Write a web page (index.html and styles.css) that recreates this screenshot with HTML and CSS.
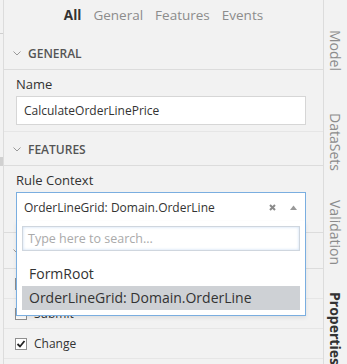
FILE: index.html
```html
<!DOCTYPE html>
<html lang="en">
<head>
  <meta charset="UTF-8">
  <title>Rule Properties</title>
  <link rel="stylesheet" href="styles.css">
</head>
<body>
  <div class="shell">
    <div class="edge">
      <div class="edge-line"></div>
      <div class="edge-block"></div>
    </div>

    <div class="panel">
      <nav class="top-tabs">
        <span class="active">All</span>
        <span>General</span>
        <span>Features</span>
        <span>Events</span>
      </nav>

      <section class="group">
        <header class="group-head">
          <svg class="chev" width="8" height="5" viewBox="0 0 8 5"><path d="M0.5 0.5 L4 4 L7.5 0.5" fill="none" stroke="#999" stroke-width="1"/></svg>
          GENERAL
        </header>
        <div class="field">
          <label>Name</label>
          <div class="input">CalculateOrderLinePrice</div>
        </div>
      </section>

      <section class="group">
        <header class="group-head">
          <svg class="chev" width="8" height="5" viewBox="0 0 8 5"><path d="M0.5 0.5 L4 4 L7.5 0.5" fill="none" stroke="#999" stroke-width="1"/></svg>
          FEATURES
        </header>
        <div class="field field-last">
          <label>Rule Context</label>
          <div class="select">
            <span class="select-value">OrderLineGrid: Domain.OrderLine</span>
            <svg class="clear" width="7" height="7" viewBox="0 0 7 7"><path d="M1 1 L6 6 M6 1 L1 6" stroke="#8a8a8a" stroke-width="2"/></svg>
            <svg class="caret" width="7" height="5" viewBox="0 0 7 5"><path d="M0 5 L3.5 0.5 L7 5 Z" fill="#999"/></svg>

            <div class="dropdown">
              <div class="search">Type here to search...</div>
              <ul class="options">
                <li>FormRoot</li>
                <li class="hover">OrderLineGrid: Domain.OrderLine</li>
              </ul>
            </div>
          </div>
        </div>
      </section>

      <section class="group">
        <header class="group-head group-head-events">
          <svg class="chev" width="8" height="5" viewBox="0 0 8 5"><path d="M0.5 0.5 L4 4 L7.5 0.5" fill="none" stroke="#999" stroke-width="1"/></svg>
          EVENTS
        </header>
        <div class="check-row"><span class="box"></span>Load</div>
        <div class="check-row"><span class="box"></span>Submit</div>
        <div class="check-row"><span class="box"><svg width="10" height="10" viewBox="0 0 10 10"><path d="M1.5 5 L4 7.5 L8.5 2" fill="none" stroke="#222" stroke-width="1.8"/></svg></span>Change</div>
      </section>
    </div>

    <aside class="side-tabs">
      <span class="tab-model">Model</span>
      <span class="tab-datasets">DataSets</span>
      <span class="tab-validation">Validation</span>
      <span class="active">Properties</span>
    </aside>
  </div>
</body>
</html>
```

FILE: styles.css
```css
body {
  margin: 0;
  font-family: "Open Sans", sans-serif;
  background: #f2f2f2;
  color: #333;
}

.shell {
  display: flex;
  height: 364px;
  overflow: hidden;
}

.edge {
  width: 3px;
  border-right: 1px solid #dcdcdc;
}

.edge-line {
  margin-top: 33px;
  height: 1px;
  background: #cfcfcf;
}

.edge-block {
  margin-top: 123px;
  height: 9px;
  background: #d0d0d0;
}

.panel {
  flex: 1;
  min-width: 0;
}

.top-tabs {
  height: 36px;
  display: flex;
  justify-content: center;
  align-items: center;
  gap: 12px;
  padding-bottom: 6px;
  box-sizing: border-box;
  font-size: 13.5px;
  color: #8c8c8c;
}

.top-tabs .active {
  color: #333;
  font-weight: 700;
}

.group-head {
  height: 34px;
  box-sizing: border-box;
  border-bottom: 1px solid #dcdcdc;
  display: flex;
  align-items: center;
  padding: 1px 0 0 9px;
  font-size: 12px;
  font-weight: 600;
  color: #555;
}

.group-head-events {
  height: 36px;
}

.chev {
  margin-right: 7px;
}

.field {
  padding: 5px 17px 6px 12px;
  border-bottom: 1px solid #e6e6e6;
}

.field-last {
  padding-bottom: 10px;
  border-bottom-color: #dcdcdc;
}

.field label {
  display: block;
  line-height: 18px;
  font-size: 13px;
  margin-bottom: 3px;
}

.input {
  height: 29px;
  box-sizing: border-box;
  border: 1px solid #d6d6d6;
  background: #fff;
  padding-left: 7px;
  font-size: 12px;
  line-height: 27px;
}

.select {
  position: relative;
  height: 30px;
  box-sizing: border-box;
  border: 1px solid #7aaee0;
  background: #fff;
  display: flex;
  align-items: center;
  padding: 0 8px 0 7px;
  font-size: 12px;
}

.select-value {
  flex: 1;
}

.clear {
  margin-right: 14px;
}

.dropdown {
  position: absolute;
  left: -1px;
  right: -1px;
  top: 100%;
  background: #fff;
  border: 1px solid #7aaee0;
  border-top: none;
  padding: 5px 5px 5px;
  box-shadow: 0 2px 4px rgba(0, 0, 0, 0.08);
}

.search {
  height: 25px;
  box-sizing: border-box;
  border: 1px solid #cfd6de;
  box-shadow: inset 0 0 3px rgba(90, 150, 220, 0.35);
  padding-left: 5px;
  font-size: 12.5px;
  line-height: 23px;
  color: #aaa;
}

.options {
  list-style: none;
  margin: 11px 0 0;
  padding: 0;
}

.options li {
  height: 24px;
  line-height: 24px;
  padding-left: 7px;
  font-size: 14px;
  color: #333;
}

.options li.hover {
  background: #ced1d5;
}

.check-row {
  height: 30px;
  box-sizing: border-box;
  border-bottom: 1px solid #e6e6e6;
  display: flex;
  align-items: center;
  padding-left: 11px;
  font-size: 12px;
}

.box {
  width: 12px;
  height: 12px;
  box-sizing: border-box;
  border: 1px solid #8f8f8f;
  background: #fff;
  margin-right: 7px;
  display: flex;
  align-items: center;
  justify-content: center;
}

.side-tabs {
  width: 24px;
  border-left: 1px solid #dcdcdc;
  display: flex;
  flex-direction: column;
  align-items: center;
  padding-top: 30px;
  box-sizing: border-box;
  font-size: 14px;
  color: #8c8c8c;
}

.side-tabs span {
  writing-mode: vertical-rl;
  flex: none;
}

.side-tabs .tab-model {
  height: 83px;
}

.side-tabs .tab-datasets {
  height: 87px;
}

.side-tabs .tab-validation {
  height: 92px;
}

.side-tabs .active {
  color: #333;
  font-weight: 700;
}
```
